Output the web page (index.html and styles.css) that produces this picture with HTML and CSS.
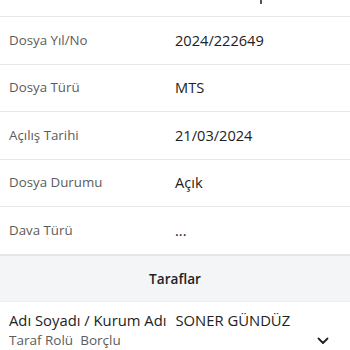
FILE: index.html
```html
<!DOCTYPE html>
<html lang="tr">
<head>
<meta charset="utf-8">
<link rel="stylesheet" href="styles.css">
</head>
<body>
<div class="page">
  <div class="row row-top"><span class="label"></span><span class="value"><span class="tick"></span></span></div>
  <div class="row row-tall"><span class="label">Dosya Yıl/No</span><span class="value">2024/222649</span></div>
  <div class="row row-short"><span class="label">Dosya Türü</span><span class="value">MTS</span></div>
  <div class="row row-tall"><span class="label">Açılış Tarihi</span><span class="value">21/03/2024</span></div>
  <div class="row row-short"><span class="label">Dosya Durumu</span><span class="value">Açık</span></div>
  <div class="row row-tall row-last"><span class="label">Dava Türü</span><span class="value">...</span></div>
  <div class="section">Taraflar</div>
  <div class="party">
    <div class="party-text">
      <div class="party-name"><span>Adı Soyadı / Kurum Adı</span><span>SONER GÜNDÜZ</span></div>
      <div class="party-role"><span>Taraf Rolü</span><span>Borçlu</span></div>
    </div>
    <svg class="chev" width="12" height="8" viewBox="0 0 12 8"><path d="M1.5 1.5 L6 6 L10.5 1.5" fill="none" stroke="#222" stroke-width="1.8" stroke-linecap="round" stroke-linejoin="round"/></svg>
  </div>
</div>
</body>
</html>
```
FILE: styles.css
```css
html, body { margin: 0; padding: 0; background: #fff; }
body { font-family: "Open Sans", "Noto Sans", sans-serif; color: #222; }
.page { width: 350px; height: 350px; overflow: hidden; }
.row {
  display: flex; align-items: center; box-sizing: border-box;
  border-bottom: 1px solid #e8e8eb; padding-bottom: 2px;
}
.row-top { height: 17px; align-items: flex-start; padding-bottom: 0; }
.row-tall { height: 48px; }
.row-short { height: 47px; }
.row-last { border-bottom: none; height: 47px; }
.label { width: 166px; padding-left: 9px; font-size: 13.3px; color: #5c5c5c; flex: none; line-height: 18px; }
.value { font-size: 14.6px; color: #222; line-height: 20px; }
.row-top .value { padding-left: 85px; }
.tick { display: block; width: 1.5px; height: 4px; background: #555; }
.section {
  height: 45px; display: flex; align-items: center; justify-content: center;
  background: #f4f5f7; border-top: 2px solid #e4e5e8; border-bottom: 1px solid #eceef0;
  font-size: 13.6px; font-weight: 600; color: #222;
}
.party { display: flex; align-items: flex-end; padding: 8px 21px 0 9px; }
.party-text { flex: 1; }
.party-name { font-size: 14.8px; color: #222; display: flex; gap: 9px; line-height: 20px; }
.party-role { font-size: 13.5px; color: #5c5c5c; display: flex; gap: 7px; line-height: 20px; }
.chev { margin-bottom: 5px; }
```
